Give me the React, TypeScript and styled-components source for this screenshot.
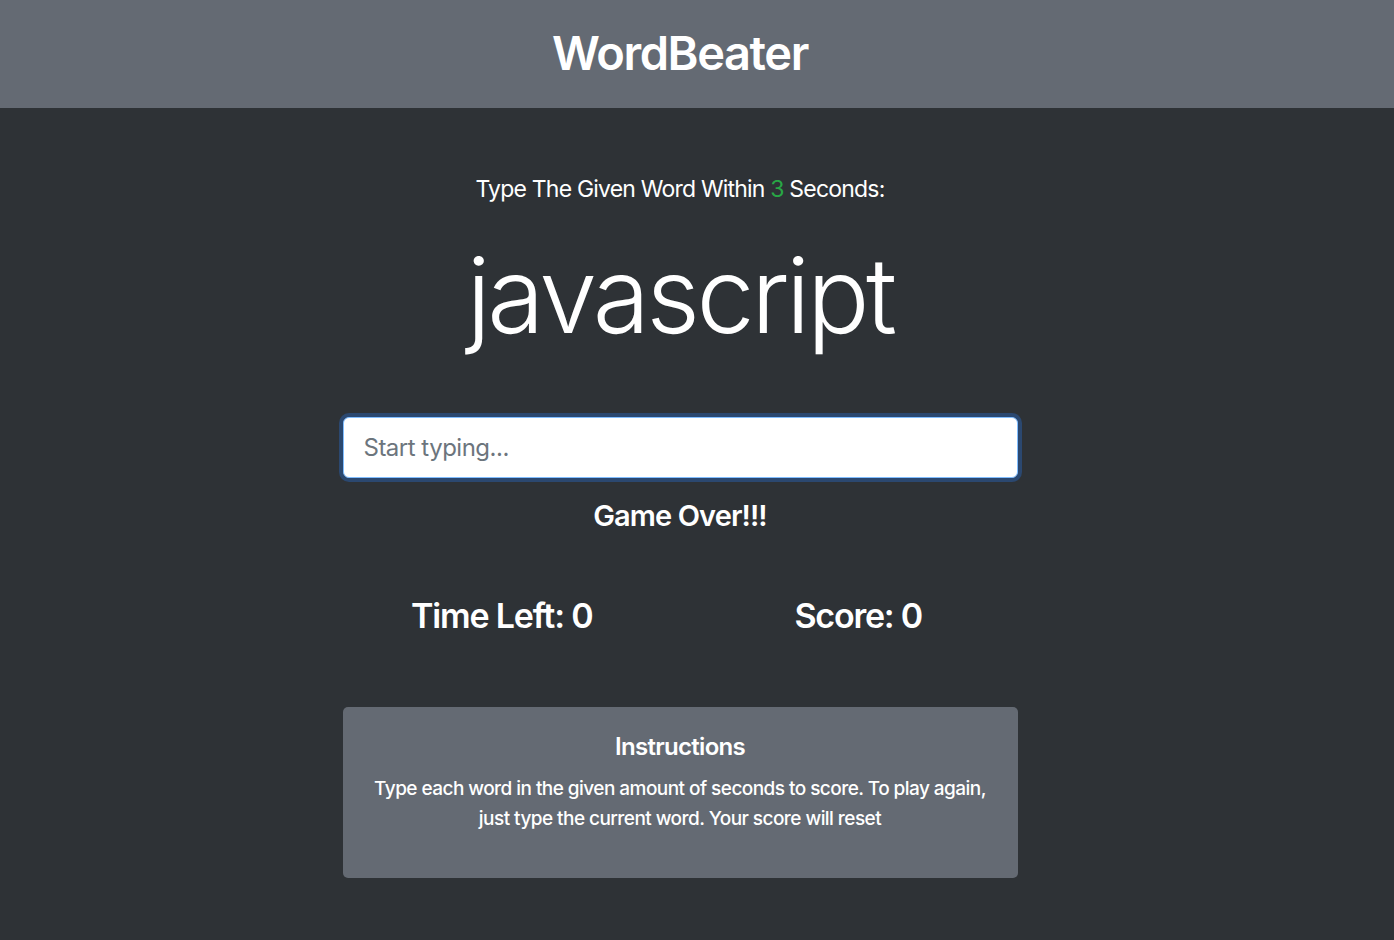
import React from "react";
import styled, { createGlobalStyle } from "styled-components";

const GlobalStyle = createGlobalStyle`
  html, body {
    margin: 0;
    padding: 0;
    background: #2e3236;
  }
  body {
    font-family: Inter, "Noto Sans", "Liberation Sans", sans-serif;
    color: #ffffff;
    min-height: 100vh;
  }
`;

const Header = styled.header`
  background: #646a73;
  height: 108px;
`;

const HeaderInner = styled.div`
  width: 1360px;
  height: 100%;
  display: flex;
  align-items: center;
  justify-content: center;
`;

const Brand = styled.h1`
  margin: 0 0 4px;
  font-size: 47px;
  font-weight: 600;
  letter-spacing: -1.4px;
  line-height: 1;
  color: #ffffff;
`;

const Main = styled.main`
  width: 1360px;
  padding-top: 66px;
  padding-bottom: 60px;
  display: flex;
  flex-direction: column;
  align-items: center;
`;

const Lead = styled.p`
  margin: 0;
  font-size: 23px;
  line-height: 30px;
  font-weight: 400;
  letter-spacing: -0.8px;
`;

const Green = styled.span`
  color: #28a745;
`;

const Word = styled.h2`
  margin: 25px 0 0;
  font-size: 104px;
  line-height: 132px;
  font-weight: 300;
  letter-spacing: -3.5px;
`;

const Column = styled.div`
  width: 675px;
  display: flex;
  flex-direction: column;
  align-items: stretch;
`;

const Input = styled.input`
  box-sizing: border-box;
  margin-top: 56px;
  width: 100%;
  height: 61px;
  padding: 0 20px;
  font-family: inherit;
  font-size: 24px;
  letter-spacing: -0.5px;
  color: #495057;
  background: #ffffff;
  border: 1px solid #80bdff;
  border-radius: 6px;
  box-shadow: 0 0 0 4px #2b4870;
  outline: none;
  &::placeholder {
    color: #6c757d;
  }
`;

const Status = styled.h4`
  margin: 20px 0 0;
  text-align: center;
  font-size: 29px;
  line-height: 36px;
  font-weight: 600;
  letter-spacing: -0.9px;
`;

const StatsRow = styled.div`
  margin: 61px -19px 0;
  display: grid;
  grid-template-columns: 1fr 1fr;
`;

const Stat = styled.h3`
  margin: 0;
  text-align: center;
  font-size: 34px;
  line-height: 42px;
  font-weight: 600;
  letter-spacing: -1.2px;
`;

const Card = styled.section`
  margin-top: 70px;
  background: #646a73;
  border-radius: 5px;
  padding: 25px 25px 24px;
  text-align: center;
`;

const CardTitle = styled.h5`
  margin: 0 0 12px;
  font-size: 24px;
  line-height: 30px;
  font-weight: 600;
  letter-spacing: -0.7px;
`;

const CardText = styled.p`
  margin: 0 0 20px;
  font-size: 19px;
  line-height: 30px;
  font-weight: 500;
  letter-spacing: -0.55px;
`;

export default function App() {
  return (
    <>
      <GlobalStyle />
      <Header>
        <HeaderInner>
          <Brand>WordBeater</Brand>
        </HeaderInner>
      </Header>
      <Main>
        <Lead>
          Type The Given Word Within <Green>3</Green> Seconds:
        </Lead>
        <Word>javascript</Word>
        <Column>
          <Input placeholder="Start typing..." />
          <Status>Game Over!!!</Status>
          <StatsRow>
            <Stat>Time Left: 0</Stat>
            <Stat>Score: 0</Stat>
          </StatsRow>
          <Card>
            <CardTitle>Instructions</CardTitle>
            <CardText>
              Type each word in the given amount of seconds to score. To play
              again, just type the current word. Your score will reset
            </CardText>
          </Card>
        </Column>
      </Main>
    </>
  );
}
